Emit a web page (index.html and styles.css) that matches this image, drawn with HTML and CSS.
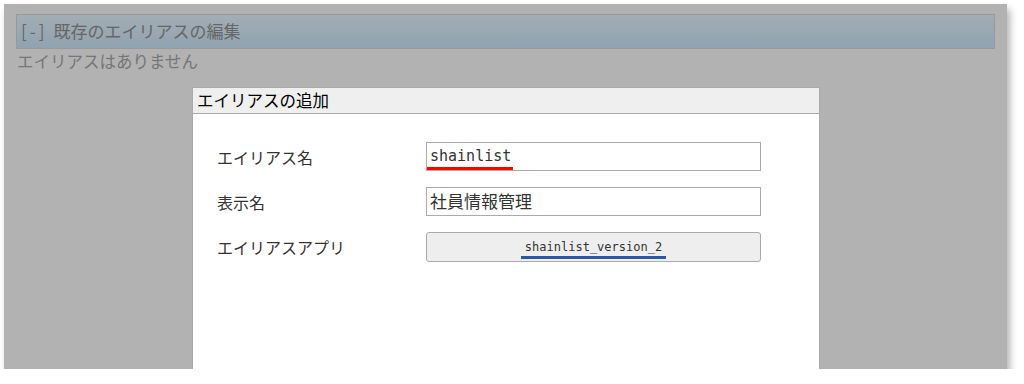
FILE: index.html
```html
<!DOCTYPE html>
<html lang="ja">
  <head>
    <meta charset="UTF-8" />
    <title>エイリアス</title>
    <link rel="stylesheet" href="styles.css">
  </head>
  <body>
    <div class="frame">
      <div class="section-head"><span class="toggle">[-]</span>既存のエイリアスの編集</div>
      <div class="empty">エイリアスはありません</div>

      <div class="dialog">
        <div class="dialog-head">エイリアスの追加</div>
        <div class="form">
          <label>エイリアス名</label>
          <div class="field"><span class="mark red">shainlist</span></div>

          <label>表示名</label>
          <div class="field jp">社員情報管理</div>

          <label>エイリアスアプリ</label>
          <div class="pick"><span class="mark blue">shainlist_version_2</span></div>
        </div>
      </div>
    </div>
  </body>
</html>
```

FILE: styles.css
```css
* {
  margin: 0;
  padding: 0;
  box-sizing: border-box;
}

body {
  background: #fff;
  font-family: "Noto Sans CJK JP", "Noto Sans", sans-serif;
}

.frame {
  margin: 4px 0 0 4px;
  width: 1003px;
  height: 365px;
  background: #b2b2b2;
  box-shadow: 3px 5px 7px rgba(0, 0, 0, 0.3);
  padding: 10px 12px 0 12px;
  overflow: hidden;
  display: flex;
  flex-direction: column;
}

.section-head {
  height: 35px;
  border: 1px solid #999;
  background: linear-gradient(#a3adb4, #8fa3b1);
  color: #666;
  font-size: 17px;
  line-height: 32px;
  padding-left: 4px;
}

.toggle {
  letter-spacing: 3px;
  margin-right: 6px;
}

.empty {
  color: #767676;
  font-size: 16.5px;
  line-height: 24px;
  padding-left: 1px;
}

.dialog {
  margin: 14px 0 0 176px;
  width: 628px;
  flex: 1;
  background: #fff;
  border: 1px solid #aaa;
  border-bottom: none;
}

.dialog-head {
  height: 26px;
  background: #efefef;
  border-bottom: 1px solid #aaa;
  color: #000;
  font-size: 16.5px;
  line-height: 24px;
  padding-left: 4px;
}

.form {
  display: grid;
  grid-template-columns: 209px 335px;
  row-gap: 16px;
  align-items: center;
  padding: 28px 0 0 24px;
}

.form label {
  color: #333;
  font-size: 16px;
}

.field {
  height: 29px;
  border: 1px solid #aaa;
  background: #fff;
  font-family: "DejaVu Sans Mono", monospace;
  font-size: 15px;
  color: #333;
  line-height: 26px;
}

.field.jp {
  font-family: "Noto Sans CJK JP", sans-serif;
  font-size: 17px;
  padding-left: 3px;
}

.pick {
  height: 30px;
  border: 1px solid #aaa;
  border-radius: 3px;
  background: #eee;
  font-family: "DejaVu Sans Mono", monospace;
  font-size: 12px;
  color: #333;
  display: flex;
  justify-content: center;
  align-items: flex-end;
  padding-bottom: 2px;
}

.mark {
  display: inline-block;
  border-bottom: 3px solid;
}

.mark.red {
  border-color: #f00;
  padding: 0 2px 0 3px;
  line-height: 22px;
}

.mark.blue {
  border-color: #2a56a4;
  padding: 0 4px;
  line-height: 18px;
}
```
